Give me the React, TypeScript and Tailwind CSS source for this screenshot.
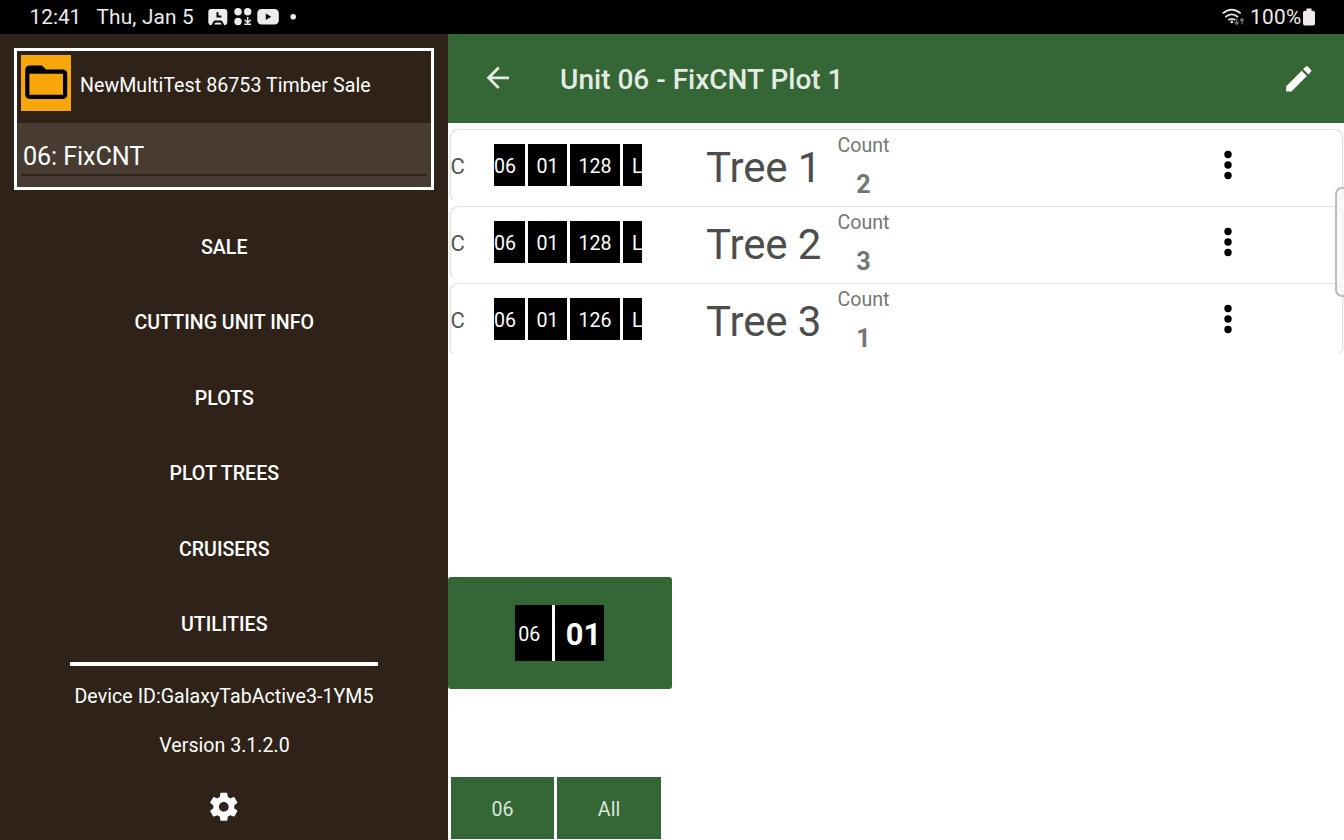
import React from "react";

const menu = ["Sale", "Cutting Unit Info", "Plots", "Plot Trees", "Cruisers", "Utilities"];

const trees = [
  { name: "Tree 1", species: "128", count: 2 },
  { name: "Tree 2", species: "128", count: 3 },
  { name: "Tree 3", species: "126", count: 1 },
];

function StatusBar() {
  return (
    <header className="flex h-[34px] shrink-0 items-center bg-black pl-[29.5px] text-[20.8px] text-[#ececec]">
      <span className="w-[67px] pt-px">12:41</span>
      <span className="w-[111px] whitespace-nowrap pt-px tracking-[0.17px]">Thu, Jan 5</span>
      <svg className="h-[18px] w-[92px]" viewBox="0 0 92 18" fill="#ececec">
        <path d="M3.3 1h13q3 0 3 3v10q0 2-1.600 3h-1.500l-1.700-3.300q-.6-1.200-2-1.200H7.300q-1.400 0-2 1.200L3.600 17H1.900Q.3 16 .3 14V4q0-3 3-3z" />
        <path d="M9.500 4.200v4.300h3.900" fill="none" stroke="#000" strokeWidth="2" />
        <path d="M6.300 16.600q.3-2 2-2h3.400q1.700 0 2 2z" />
        <circle cx="30" cy="3.8" r="3.7" />
        <circle cx="39.7" cy="3.8" r="3.7" />
        <circle cx="30" cy="13.500" r="3.7" />
        <path d="M39.7 9v5.500M36.6 11.800l3.100 2.900 3.100-2.900M36.3 16.300h6.800" fill="none" stroke="#ececec" strokeWidth="1.500" />
        <rect x="49.3" y="1" width="21.500" height="15.600" rx="4.200" />
        <path d="M57.8 5.500v6.600l5.400-3.300z" fill="#000" />
        <circle cx="85.2" cy="8.800" r="2.800" />
      </svg>
      <div className="ml-auto flex items-center pr-[29px]">
        <svg className="mr-[5px] h-[18px] w-[23px]" viewBox="0 0 23 18" fill="none" stroke="#ececec" strokeWidth="1.7">
          <path d="M.7 5.300q9-7.500 18 0" />
          <path d="M3.400 9q6.300-5.300 12.600 0" />
          <path d="M6.300 12.200q3.500-2.800 7 0" />
          <circle cx="9.800" cy="13.900" r="1.300" fill="#ececec" stroke="none" />
          <path d="M14.700 10.800v5.400M12.800 14.300l1.900 2 1.900-2M20 16.200v-5.400M18.100 12.700l1.900-2 1.900 2" stroke="#777" strokeWidth="1.300" />
        </svg>
        <span className="pt-px tracking-[0.3px]">100%</span>
        <svg className="ml-[1.500px] h-[18px] w-[12px]" viewBox="0 0 12 18" fill="#ececec">
          <path d="M3.500.5h5v2.300H10q2 0 2 2V15.500q0 2-2 2H2q-2 0-2-2V4.800q0-2 2-2h1.500z" />
        </svg>
      </div>
    </header>
  );
}

function Sidebar() {
  return (
    <aside className="flex w-[448px] shrink-0 flex-col items-center bg-[#2f2319] pt-[13.500px] text-[19.6px] text-white">
      <section className="flex h-[142px] w-[420px] flex-col border-[3px] border-white">
        <div className="flex h-[72.500px] pl-1 pt-[4px]">
          <div className="flex h-[56px] w-[50.4px] items-center justify-center bg-[#f7a70a]">
            <svg className="h-[50.4px] w-[50.4px]" viewBox="0 0 24 24" fill="#000">
              <path d="M20 6h-8l-2-2H4c-1.100 0-1.990.9-1.990 2L2 18c0 1.100.9 2 2 2h16c1.100 0 2-.9 2-2V8c0-1.100-.9-2-2-2zm0 12H4V8h16v10z" />
            </svg>
          </div>
          <span className="pl-[8.500px] leading-[61px] tracking-[0.06px]">NewMultiTest 86753 Timber Sale</span>
        </div>
        <div className="flex flex-1 flex-col bg-[#483c32] px-[5px]">
          <span className="h-[51px] pl-px text-[25.2px] leading-[68px] tracking-[-0.1px]">06: FixCNT</span>
          <div className="h-[2px] bg-[#2b2116]" />
        </div>
      </section>
      <nav className="flex flex-col items-center pt-[20px] font-medium uppercase">
        {menu.map((item) => (
          <button key={item} className="h-[75.6px] pl-[0.500px] uppercase leading-[75.6px]">{item}</button>
        ))}
      </nav>
      <div className="mt-[-1.500px] h-[4.500px] w-[308px] bg-white" />
      <span className="mt-[19px] leading-6 tracking-[0.04px]">Device ID:GalaxyTabActive3-1YM5</span>
      <span className="mt-[25px] pl-px leading-6">Version 3.1.2.0</span>
      <svg className="mt-[31.500px] h-[33.6px] w-[33.6px]" viewBox="0 0 24 24" fill="#fff">
        <path d="M19.43 12.98c.04-.32.07-.64.07-.98s-.03-.66-.07-.98l2.11-1.65c.19-.15.24-.42.12-.64l-2-3.46c-.12-.22-.39-.3-.61-.22l-2.49 1c-.52-.4-1.08-.73-1.69-.98l-.38-2.65C14.46 2.18 14.25 2 14 2h-4c-.25 0-.46.18-.49.42l-.38 2.65c-.61.25-1.17.59-1.69.98l-2.49-1c-.23-.09-.49 0-.61.22l-2 3.46c-.13.22-.07.49.12.64l2.11 1.65c-.04.32-.07.65-.07.98s.03.66.07.98l-2.11 1.65c-.19.15-.24.42-.12.64l2 3.46c.12.22.39.3.61.22l2.49-1c.52.4 1.08.73 1.69.98l.38 2.65c.03.24.24.42.49.42h4c.25 0 .46-.18.49-.42l.38-2.65c.61-.25 1.17-.59 1.69-.98l2.49 1c.23.09.49 0 .61-.22l2-3.46c.12-.22.07-.49-.12-.64l-2.11-1.65zM12 15.5c-1.93 0-3.5-1.57-3.5-3.5s1.57-3.5 3.5-3.5 3.5 1.57 3.5 3.5-1.57 3.5-3.5 3.5z" />
      </svg>
    </aside>
  );
}

function TreeRow({ name, species, count }: { name: string; species: string; count: number }) {
  return (
    <li className="flex h-[71px] overflow-hidden px-[2.500px] pt-px">
      <div className="flex h-[72px] w-full rounded-[8px] bg-white text-[19.6px] text-[#555] shadow-[0_0_3px_rgba(0,0,0,0.32)]">
        <span className="w-[43.500px] text-[22px] leading-[73px]">C</span>
        <div className="mt-[14px] flex h-[42px] w-[148px] gap-[3px] overflow-hidden leading-[46px] text-white">
          <span className="w-[31px] shrink-0 bg-black">06</span>
          <span className="w-[39px] shrink-0 bg-black text-center">01</span>
          <span className="w-[50px] shrink-0 bg-black text-center">{species}</span>
          <span className="w-[36px] shrink-0 bg-black pl-[9px]">L</span>
        </div>
        <span className="ml-[64px] w-[124px] whitespace-nowrap text-[42px] leading-[75px] tracking-[-0.1px] text-[#4d4d4d]">{name}</span>
        <div className="flex w-[67px] flex-col items-center text-[#757575]">
          <span className="h-[31px] leading-[31px]">Count</span>
          <span className="text-[25.2px] font-bold leading-[47px]">{count}</span>
        </div>
        <svg className="ml-[322.500px] mt-[19px] h-[32px] w-[16px] shrink-0" viewBox="0 0 16 32" fill="#000">
          <circle cx="8" cy="5.500" r="3.700" />
          <circle cx="8" cy="16" r="3.700" />
          <circle cx="8" cy="26.500" r="3.700" />
        </svg>
      </div>
    </li>
  );
}

export default function App() {
  return (
    <div className="flex h-[840px] w-[1344px] flex-col overflow-hidden bg-white font-[Roboto,sans-serif]">
      <StatusBar />
      <div className="flex min-h-0 flex-1">
        <Sidebar />
        <main className="relative flex min-w-0 flex-1 flex-col bg-white">
          <div className="flex h-[89px] shrink-0 items-center bg-[#356635] pl-[32.500px] pr-[28px] text-[#e4ebe2]">
            <svg className="mb-[2px] h-[33.6px] w-[33.6px]" viewBox="0 0 24 24" fill="currentColor">
              <path d="M20 11H7.830l5.590-5.590L12 4l-8 8 8 8 1.410-1.410L7.830 13H20v-2z" />
            </svg>
            <h1 className="pl-[46px] pt-[3.500px] text-[28px] font-medium">Unit 06 - FixCNT Plot 1</h1>
            <svg className="ml-auto h-[33.6px] w-[33.6px]" viewBox="0 0 24 24" fill="#fff">
              <path d="M3 17.250V21h3.750L17.810 9.940l-3.750-3.750L3 17.250zM20.710 7.040c.39-.39.39-1.020 0-1.410l-2.340-2.340c-.39-.39-1.020-.39-1.410 0l-1.830 1.830 3.750 3.750 1.830-1.830z" />
            </svg>
          </div>
          <ul className="flex flex-col gap-1.5 pt-1.5">
            {trees.map((tree) => (
              <TreeRow key={tree.name} {...tree} />
            ))}
          </ul>
          <div className="mt-auto flex h-[112px] w-[224px] items-center justify-center rounded-[3px] bg-[#356635] pr-px text-white">
            <div className="flex h-[56px] w-[88.500px] bg-white leading-[60px]">
              <span className="w-[36.500px] bg-black pl-[3px] text-[19.6px]">06</span>
              <span className="ml-[3px] flex-1 bg-black pl-[11px] text-[30.8px] font-bold">01</span>
            </div>
          </div>
          <div className="mb-[1.500px] ml-[3px] mt-[88px] flex h-[61.500px] gap-[3px] text-[19.6px] text-[#dce6da]">
            <button className="w-[103px] bg-[#356635] pt-[3px]">06</button>
            <button className="w-[104px] bg-[#356635] pt-[3px]">All</button>
          </div>
          <div className="absolute right-[-8px] top-[153px] h-[110px] w-[17px] rounded-[7px] border-2 border-[#bdbdbd] bg-[#f7f7f7]/60" />
        </main>
      </div>
    </div>
  );
}
